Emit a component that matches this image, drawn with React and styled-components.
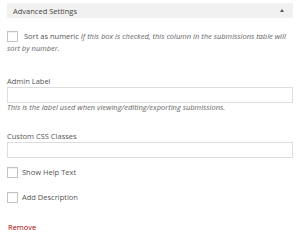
import React from "react";
import styled, { createGlobalStyle } from "styled-components";

const GlobalStyle = createGlobalStyle`
  body {
    margin: 0;
    background: #fff;
    font-family: "Open Sans", "Liberation Sans", sans-serif;
    font-size: 7.5px;
    color: #555;
  }
`;

const Panel = styled.div`
  width: 300px;
  height: 242px;
  box-sizing: border-box;
  padding: 3px 7px 0;
  display: flex;
  flex-direction: column;
`;

const Header = styled.div`
  height: 15px;
  background: #f1f1f1;
  display: flex;
  align-items: center;
  justify-content: space-between;
  padding: 0 9px 0 6px;
  color: #444;
`;

const Arrow = styled.span`
  width: 0;
  height: 0;
  border-left: 2.5px solid transparent;
  border-right: 2.5px solid transparent;
  border-bottom: 3px solid #555;
`;

const Para = styled.div`
  margin-top: ${(p) => p.$mt || 0}px;
  line-height: ${(p) => p.$lh || 12}px;
`;

const Box = styled.span`
  display: inline-block;
  width: 9px;
  height: 9px;
  border: 1px solid #c4c4c4;
  background: #fff;
  box-shadow: inset 0 1px 1px rgba(0, 0, 0, 0.06);
  vertical-align: middle;
  margin: -2px 4px 0 0;
`;

const Hint = styled.em`
  font-style: italic;
  color: #666;
`;

const Label = styled.div`
  margin-top: ${(p) => p.$mt}px;
  line-height: 12px;
`;

const Input = styled.div`
  height: 16px;
  box-sizing: border-box;
  border: 1px solid #ddd;
  background: #fff;
`;

const Row = styled.div`
  margin-top: ${(p) => p.$mt}px;
  height: 12px;
  display: flex;
  align-items: center;
  ${Box} {
    margin: 0 4px 0 0;
  }
`;

const Remove = styled.a`
  margin-top: 18px;
  line-height: 12px;
  color: #a00;
  padding-left: 1px;
`;

export default function App() {
  return (
    <>
      <GlobalStyle />
      <Panel>
        <Header>
          <span>Advanced Settings</span>
          <Arrow />
        </Header>
        <Para $mt={12}>
          <Box /> Sort as numeric{" "}
          <Hint>
            If this box is checked, this column in the submissions table will
            sort by number.
          </Hint>
        </Para>
        <Label $mt={21}>Admin Label</Label>
        <Input />
        <Para $lh={9}>
          <Hint>This is the label used when viewing/editing/exporting submissions.</Hint>
        </Para>
        <Label $mt={18}>Custom CSS Classes</Label>
        <Input />
        <Row $mt={8}>
          <Box />
          Show Help Text
        </Row>
        <Row $mt={13}>
          <Box />
          Add Description
        </Row>
        <Remove>Remove</Remove>
      </Panel>
    </>
  );
}
